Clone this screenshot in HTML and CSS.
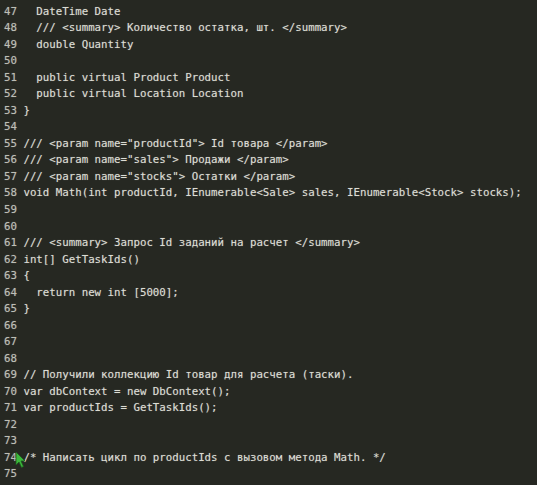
FILE: index.html
```html
<!DOCTYPE html>
<html lang="ru">
<head>
<meta charset="utf-8">
<title>Code</title>
<link rel="stylesheet" href="styles.css">
</head>
<body>
<div class="editor">
<div class="code">
<div class="ln"><span class="num">47</span><span class="src">  DateTime Date</span></div>
<div class="ln"><span class="num">48</span><span class="src">  /// &lt;summary&gt; Количество остатка, шт. &lt;/summary&gt;</span></div>
<div class="ln"><span class="num">49</span><span class="src">  double Quantity</span></div>
<div class="ln"><span class="num">50</span><span class="src"></span></div>
<div class="ln"><span class="num">51</span><span class="src">  public virtual Product Product</span></div>
<div class="ln"><span class="num">52</span><span class="src">  public virtual Location Location</span></div>
<div class="ln"><span class="num">53</span><span class="src">}</span></div>
<div class="ln"><span class="num">54</span><span class="src"></span></div>
<div class="ln"><span class="num">55</span><span class="src">/// &lt;param name="productId"&gt; Id товара &lt;/param&gt;</span></div>
<div class="ln"><span class="num">56</span><span class="src">/// &lt;param name="sales"&gt; Продажи &lt;/param&gt;</span></div>
<div class="ln"><span class="num">57</span><span class="src">/// &lt;param name="stocks"&gt; Остатки &lt;/param&gt;</span></div>
<div class="ln"><span class="num">58</span><span class="src">void Math(int productId, IEnumerable&lt;Sale&gt; sales, IEnumerable&lt;Stock&gt; stocks);</span></div>
<div class="ln"><span class="num">59</span><span class="src"></span></div>
<div class="ln"><span class="num">60</span><span class="src"></span></div>
<div class="ln"><span class="num">61</span><span class="src">/// &lt;summary&gt; Запрос Id заданий на расчет &lt;/summary&gt;</span></div>
<div class="ln"><span class="num">62</span><span class="src">int[] GetTaskIds()</span></div>
<div class="ln"><span class="num">63</span><span class="src">{</span></div>
<div class="ln"><span class="num">64</span><span class="src">  return new int [5000];</span></div>
<div class="ln"><span class="num">65</span><span class="src">}</span></div>
<div class="ln"><span class="num">66</span><span class="src"></span></div>
<div class="ln"><span class="num">67</span><span class="src"></span></div>
<div class="ln"><span class="num">68</span><span class="src"></span></div>
<div class="ln"><span class="num">69</span><span class="src">// Получили коллекцию Id товар для расчета (таски).</span></div>
<div class="ln"><span class="num">70</span><span class="src">var dbContext = new DbContext();</span></div>
<div class="ln"><span class="num">71</span><span class="src">var productIds = GetTaskIds();</span></div>
<div class="ln"><span class="num">72</span><span class="src"></span></div>
<div class="ln"><span class="num">73</span><span class="src"></span></div>
<div class="ln"><span class="num">74</span><span class="src">/* Написать цикл по productIds с вызовом метода Math. */</span>
<svg class="pointer" width="11" height="18" viewBox="0 0 11 18"><path d="M1 1 L1 14 L4 11 L6.5 16.5 L8.5 15.5 L6 10 L10 10 Z" fill="#3cb83c" stroke="#1d5a1d" stroke-width="0.8"/></svg></div>
<div class="ln"><span class="num">75</span><span class="src"></span></div>
</div>
</div>
</body>
</html>
```
FILE: styles.css
```css
html, body {
  margin: 0;
  padding: 0;
  background: #262822;
  height: 100%;
  overflow: hidden;
}
.editor {
  background: #262822;
  height: 485px;
  overflow: hidden;
}
.code {
  padding-top: 3.6px;
  padding-left: 4px;
  font-family: "DejaVu Sans Mono", monospace;
  font-size: 10.75px;
  line-height: 16.54px;
  color: #dcdcd4;
  text-shadow: 0 0 1px rgba(220, 220, 210, 0.45);
}
.ln {
  display: flex;
  white-space: pre;
  height: 16.54px;
  position: relative;
}
.num {
  width: 2ch;
  margin-right: 1ch;
  color: #bdbeb6;
  flex: none;
}
.src {
  flex: none;
}
.pointer {
  position: absolute;
  left: 11px;
  top: 1px;
}
```
